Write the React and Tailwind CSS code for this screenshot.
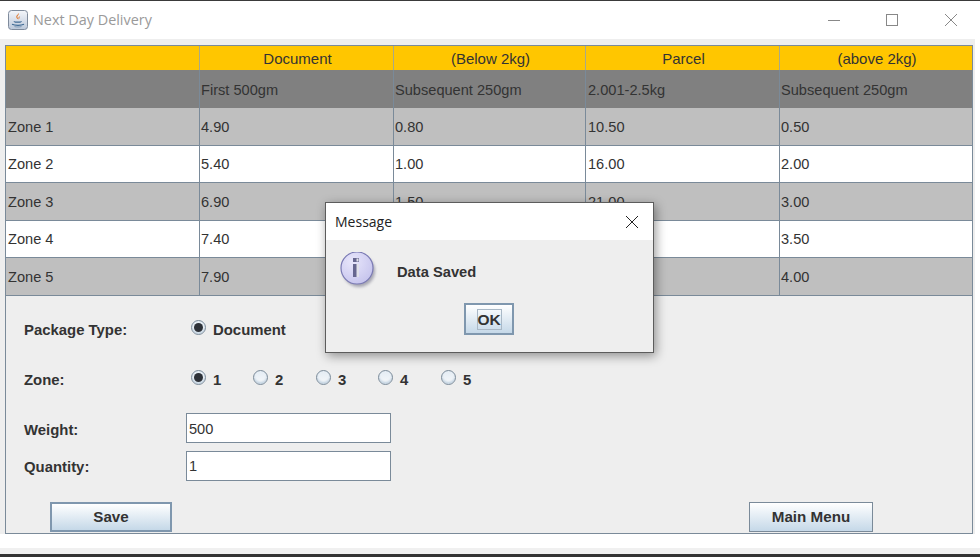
const COLUMNS = ['', 'Document', '(Below 2kg)', 'Parcel', '(above 2kg)']
const SUB_COLUMNS = ['', 'First 500gm', 'Subsequent 250gm', '2.001-2.5kg', 'Subsequent 250gm']

// the dialog hides the middle cells of zones 4 and 5
const ZONES = [
  { cells: ['Zone 1', '4.90', '0.80', '10.50', '0.50'], stripe: true, height: 'h-[38px]' },
  { cells: ['Zone 2', '5.40', '1.00', '16.00', '2.00'], stripe: false, height: 'h-[37px]' },
  { cells: ['Zone 3', '6.90', '1.50', '21.00', '3.00'], stripe: true, height: 'h-[38px]' },
  { cells: ['Zone 4', '7.40', '', '', '3.50'], stripe: false, height: 'h-[37px]' },
  { cells: ['Zone 5', '7.90', '', '', '4.00'], stripe: true, height: 'h-[37px]' },
]

const ROW_GRID = 'grid grid-cols-[194px_194px_192px_194px_192px]'

function Radio({ checked }) {
  return (
    <span className="w-[15px] h-[15px] mb-[4px] shrink-0 rounded-full border border-[#7a8a99] bg-gradient-to-b from-[#e4ecf4] to-[#f6f8fa] flex items-center justify-center shadow-[inset_0_-2px_2px_#c4d4e2]">
      {checked && <span className="w-[9px] h-[9px] rounded-full bg-[#2d3138]" />}
    </span>
  )
}

function RadioOption({ label, checked, className }) {
  return (
    <div className={`flex items-center gap-[7px] ${className}`}>
      <Radio checked={checked} />
      <span>{label}</span>
    </div>
  )
}

function MetalButton({ children, className }) {
  return (
    <button className={`bg-gradient-to-b from-white to-[#c5d8e8] font-bold text-[#333] text-[15.2px] flex items-center justify-center ${className}`}>
      {children}
    </button>
  )
}

function JavaIcon() {
  return (
    <svg width="20" height="20" viewBox="0 0 20 20" className="shrink-0">
      <defs>
        <linearGradient id="javaBg" x1="0" y1="0" x2="0" y2="1">
          <stop offset="0" stopColor="#f4f6fa" />
          <stop offset="1" stopColor="#bcc8da" />
        </linearGradient>
      </defs>
      <rect x="0.5" y="0.5" width="19" height="19" rx="3" fill="url(#javaBg)" stroke="#7f8b9c" />
      <path d="M10.5 3c1.2 1.6-1.8 2.8-1 4.6.3.7 1 1.2 1.2 2-1.4-.8-2.8-1.9-2.4-3.4C8.6 5 10.300 4.500 10.500 3z" fill="#e0762a" />
      <path d="M12 6.500c-.9.600-1.500 1.200-1 2.200" fill="none" stroke="#e0762a" strokeWidth="0.9" />
      <path d="M5.500 11c2 .8 6.500.8 8.500 0-.4 1-1.200 1.500-1.800 1.800H7.300C6.700 12.500 5.900 12 5.500 11z" fill="#3f6a94" />
      <path d="M4 14.300c3 1.400 9 1.400 12 0" fill="none" stroke="#3f6a94" strokeWidth="1.100" />
      <path d="M6.500 16.600c2 .5 5 .5 7 0" fill="none" stroke="#6d8cab" strokeWidth="0.800" />
    </svg>
  )
}

function InfoIcon() {
  return (
    <svg width="40" height="42" viewBox="0 0 40 42" className="shrink-0">
      <defs>
        <radialGradient id="infoFill" cx="0.35" cy="0.3" r="0.8">
          <stop offset="0" stopColor="#e8e6fb" />
          <stop offset="1" stopColor="#c4c2ec" />
        </radialGradient>
        <filter id="infoShadow" x="-30%" y="-30%" width="160%" height="160%">
          <feGaussianBlur stdDeviation="1.600" />
        </filter>
      </defs>
      <circle cx="19" cy="19" r="16" fill="#77778a" opacity="0.6" filter="url(#infoShadow)" />
      <circle cx="17" cy="16" r="16" fill="url(#infoFill)" stroke="#7a7ab4" strokeWidth="1.200" />
      <rect x="13" y="6" width="6" height="4" fill="#66668f" />
      <rect x="13" y="12" width="6" height="13" fill="#66668f" />
      <rect x="16.500" y="6.500" width="2" height="3" fill="#fff" opacity="0.800" />
      <rect x="16.500" y="12" width="2.500" height="13" fill="#fff" opacity="0.800" />
    </svg>
  )
}

function CloseGlyph({ color }) {
  return (
    <svg width="14" height="14" viewBox="0 0 14 14">
      <path d="M1 1l12 12M13 1L1 13" stroke={color} strokeWidth="1" fill="none" />
    </svg>
  )
}

function RatesTable() {
  return (
    <div className="border-b border-[#7a8a99]">
      <div className={`${ROW_GRID} h-[24px] bg-[#ffc600] text-[15px]`}>
        {COLUMNS.map((col, i) => (
          <div key={i} className={`flex items-center justify-center pt-[2px] pl-[2px] ${i < 4 ? 'border-r border-[#a7a98a]' : ''}`}>
            {col}
          </div>
        ))}
      </div>
      <div className={`${ROW_GRID} h-[38px] bg-[#808080]`}>
        {SUB_COLUMNS.map((col, i) => (
          <div key={i} className={`flex items-center pt-[3px] ${i === 3 ? 'pl-[2px]' : 'pl-[1px]'} ${i < 4 ? 'border-r border-[#7a8a99]' : ''}`}>
            {col}
          </div>
        ))}
      </div>
      {ZONES.map((zone, rowIndex) => (
        <div
          key={zone.cells[0]}
          className={`${ROW_GRID} ${zone.height} ${zone.stripe ? 'bg-[#bfbfbf]' : 'bg-white'} ${rowIndex < 4 ? 'border-b border-[#7a8a99]' : ''}`}
        >
          {zone.cells.map((cell, i) => (
            <div key={i} className={`flex items-center pt-[2px] ${i === 0 || i === 3 ? 'pl-[2px]' : 'pl-[1px]'} ${i < 4 ? 'border-r border-[#7a8a99]' : ''}`}>
              {cell}
            </div>
          ))}
        </div>
      ))}
    </div>
  )
}

function OrderForm() {
  return (
    <div className="flex flex-col pl-[18px] font-bold text-[14.9px]">
      <div className="flex items-center h-[30px] mt-[19px]">
        <span className="w-[167px]">Package Type:</span>
        <RadioOption label="Document" checked />
      </div>
      <div className="flex items-center h-[30px] mt-[20px]">
        <span className="w-[167px]">Zone:</span>
        <RadioOption label="1" checked className="w-[62px]" />
        <RadioOption label="2" className="w-[63px]" />
        <RadioOption label="3" className="w-[62px]" />
        <RadioOption label="4" className="w-[63px]" />
        <RadioOption label="5" className="w-[62px]" />
      </div>
      <div className="flex items-center h-[30px] mt-[18px]">
        <span className="w-[162px] pt-[5px]">Weight:</span>
        <div className="w-[205px] h-[30px] pl-[2px] pt-[3px] flex items-center bg-white border border-[#7a8a99] font-normal text-[14.6px]">500</div>
      </div>
      <div className="flex items-center h-[30px] mt-[8px]">
        <span className="w-[162px] pt-[3px]">Quantity:</span>
        <div className="w-[205px] h-[30px] pl-[2px] pt-[2px] flex items-center bg-white border border-[#7a8a99] font-normal text-[14.6px]">1</div>
      </div>
      <div className="flex items-center justify-between mt-[21px] pl-[26px] pr-[99px]">
        <MetalButton className="w-[122px] h-[30px] border-2 border-[#7f97ae]">Save</MetalButton>
        <MetalButton className="w-[124px] h-[30px] border border-[#7a8a99]">Main Menu</MetalButton>
      </div>
    </div>
  )
}

function MessageDialog() {
  return (
    <div className="absolute left-[325px] top-[202px] w-[329px] h-[151px] border border-[#5c5c5c] bg-[#eeeeee] flex flex-col shadow-[2px_3px_10px_rgba(0,0,0,0.4)]">
      <div className="h-[37px] bg-white flex items-center justify-between pl-[9px] pr-[14px] font-['Open_Sans',sans-serif] text-[14px] text-[#222]">
        <span>Message</span>
        <CloseGlyph color="#222" />
      </div>
      <div className="flex items-start pl-[14px] pt-[12px]">
        <InfoIcon />
        <span className="mt-[9px] ml-[17px] font-bold text-[14.7px]">Data Saved</span>
      </div>
      <div className="flex justify-center mt-[9px] pr-[1px]">
        <MetalButton className="w-[50px] h-[32px] border-2 border-[#7f97ae]">
          <span className="border border-[#a9b8c6] w-[25px] h-[21px] pt-[1px] flex items-center justify-center text-[15.5px]">OK</span>
        </MetalButton>
      </div>
    </div>
  )
}

export default function App() {
  return (
    <div className="relative w-[980px] h-[557px] overflow-hidden bg-white flex flex-col font-['Liberation_Sans',Arial,sans-serif] text-[14.6px] text-[#333]">
      <div className="h-[1px] bg-[#3a3a3a]" />
      <div className="h-[38px] flex items-center pl-[8px] font-['Open_Sans',sans-serif] text-[14.400px] text-[#9a9a9a]">
        <JavaIcon />
        <span className="ml-[5px]">Next Day Delivery</span>
        <div className="ml-auto flex items-center">
          <span className="w-[12px] h-px bg-[#888] mr-[46px]" />
          <span className="w-[12px] h-[12px] border border-[#888] mr-[46px]" />
          <span className="mr-[22px] flex"><CloseGlyph color="#888" /></span>
        </div>
      </div>
      <div className="w-[975px] h-[495px] bg-[#eeeeee] pl-[5px] pt-[6px]">
        <div className="w-[968px] h-[489px] border border-[#7a8a99]">
          <RatesTable />
          <OrderForm />
        </div>
      </div>
      <div className="h-[14px] bg-white" />
      <div className="h-[6px] bg-[#f0f0f0]" />
      <div className="flex-1 bg-[#333]" />
      <MessageDialog />
    </div>
  )
}
